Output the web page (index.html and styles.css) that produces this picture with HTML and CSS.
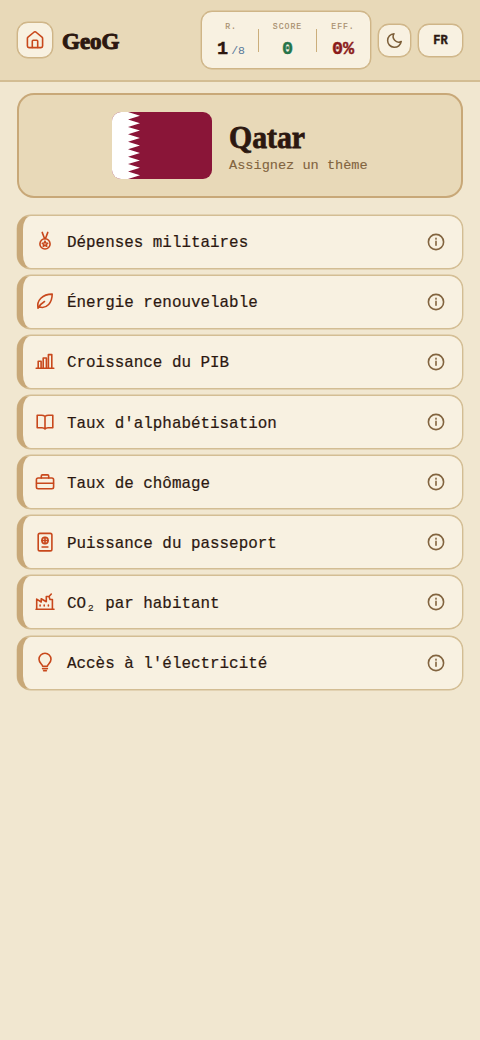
FILE: index.html
```html
<!DOCTYPE html>
<html lang="fr">
<head>
<meta charset="utf-8">
<title>GeoG</title>
<link rel="stylesheet" href="styles.css">
</head>
<body>
<svg class="defs" aria-hidden="true">
  <symbol id="info" viewBox="0 0 18 18"><circle cx="9" cy="9" r="7.6"/><path d="M9 8.3v4M9 5.4v.7"/></symbol>
</svg>
<header class="topbar">
  <button class="btn home" aria-label="Accueil"><svg class="icon" viewBox="0 0 20 20"><path d="M2.4 8.4Q2.4 7.6 3 7.1L9.2 2Q10 1.4 10.8 2L17 7.1Q17.6 7.6 17.6 8.4V16Q17.6 17.6 16 17.6H4Q2.4 17.6 2.4 16Z"/><path d="M7.3 17.4V11.2Q7.3 10.3 8.2 10.3H11.8Q12.7 10.3 12.7 11.2V17.4"/></svg></button>
  <div class="brand"><span class="fit">GeoG</span></div>
  <div class="stats">
    <div class="stat round"><span class="label">R.</span><span class="value">1<small>/8</small></span></div>
    <i class="sep"></i>
    <div class="stat score"><span class="label">SCORE</span><span class="value">0</span></div>
    <i class="sep"></i>
    <div class="stat eff"><span class="label">EFF.</span><span class="value">0%</span></div>
  </div>
  <button class="btn theme" aria-label="Mode sombre"><svg class="icon" viewBox="0 0 20 20"><path d="M9.5 2.8A5.8 5.8 0 0 0 17.1 11A7.2 7.2 0 1 1 9.5 2.8Z"/></svg></button>
  <button class="btn lang">FR</button>
</header>
<main>
  <section class="hero">
    <svg class="flag" viewBox="0 0 100 67"><rect width="100" height="67" fill="#8a1538"/><path fill="#fff" d="M0 0H16L28 3.7L16 7.4L28 11.2L16 14.9L28 18.6L16 22.3L28 26L16 29.8L28 33.5L16 37.2L28 41L16 44.7L28 48.4L16 52.1L28 55.8L16 59.6L28 63.3L16 67H0Z"/></svg>
    <div class="country"><h1><span class="fit">Qatar</span></h1><p>Assignez un thème</p></div>
  </section>
  <ul class="themes">
    <li><svg class="icon" viewBox="0 0 20 20"><path d="M7.2 1.4L9.5 7.5M12.8 1.4L10.5 7.5"/><circle cx="10" cy="12.9" r="5.1"/><path d="M10 10.2L10.8 12L12.7 12.2L11.3 13.5L11.7 15.3L10 14.4L8.3 15.3L8.7 13.5L7.3 12.2L9.2 12Z"/></svg><span>Dépenses militaires</span><svg class="info"><use href="#info"/></svg></li>
    <li><svg class="icon" viewBox="0 0 20 20"><path d="M3 17.2C1.4 9.5 7.5 3.1 17.2 3.1C17.2 11.5 12 18.2 4.4 16M3 17.2Q5 13.2 9.5 10.5"/></svg><span>Énergie renouvelable</span><svg class="info"><use href="#info"/></svg></li>
    <li><svg class="icon" viewBox="0 0 20 20"><path d="M1.2 17.2H18.8M3.2 17V10.3H6.1V17M8.2 17V7H11.4V17M13.4 17V3.6H16.8V17"/></svg><span>Croissance du PIB</span><svg class="info"><use href="#info"/></svg></li>
    <li><svg class="icon" viewBox="0 0 20 20"><path d="M10 4.3Q8.5 3.2 6.5 3.2H2.2V15.7H7Q9 15.7 10 17Q11 15.7 13 15.7H17.8V3.2H13.5Q11.5 3.2 10 4.3ZV17"/></svg><span>Taux d'alphabétisation</span><svg class="info"><use href="#info"/></svg></li>
    <li><svg class="icon" viewBox="0 0 20 20"><rect x="1.4" y="6" width="17.2" height="10.8" rx="1.7"/><path d="M6.3 6V4Q6.3 2.9 7.4 2.9H12.6Q13.7 2.9 13.7 4V6M1.6 11.2H18.4"/></svg><span>Taux de chômage</span><svg class="info"><use href="#info"/></svg></li>
    <li><svg class="icon" viewBox="0 0 20 20"><rect x="3.2" y="1.4" width="13.7" height="17.5" rx="1.7"/><circle cx="10" cy="8.5" r="3.1"/><path d="M7 8.5H13M10 5.5V11.5M7.1 15H12.9"/></svg><span>Puissance du passeport</span><svg class="info"><use href="#info"/></svg></li>
    <li><svg class="icon" viewBox="0 0 20 20"><path d="M1 17.2H19M1.7 17V7.1L6.2 10V6.7L11.3 9.7V4.5H14L15 7.5H17.4V17M14.5 4L16.3 2M5.1 14V13M9.2 14V13M13.4 14V13"/></svg><span>CO<span class="sub">₂</span> par habitant</span><svg class="info"><use href="#info"/></svg></li>
    <li><svg class="icon" viewBox="0 0 20 20"><path d="M7.6 14.3C7.6 12.3 4 11.2 4 7.2A6 6 0 0 1 16 7.2C16 11.2 12.4 12.3 12.4 14.3ZM7.6 16.6H12.4M8.6 18.8H11.4"/></svg><span>Accès à l'électricité</span><svg class="info"><use href="#info"/></svg></li>
  </ul>
</main>
</body>
</html>
```
FILE: styles.css
```css
* { box-sizing: border-box; }
body { margin: 0; min-height: 1040px; background: #f1e7d0; color: #2c1810; font-family: "Liberation Mono", monospace; }
.defs { position: absolute; width: 0; height: 0; }
svg { fill: none; stroke: currentColor; stroke-width: 1.6; stroke-linecap: round; stroke-linejoin: round; flex: none; }
.icon { width: 20px; height: 20px; }
.topbar { display: flex; align-items: center; height: 82px; padding: 0 17px; background: #e8d9b8; border-bottom: 2px solid #d3bd93; }
.btn { display: flex; align-items: center; justify-content: center; padding: 0; background: #f8f1e1; border: 1.5px solid #cfb587; border-radius: 11px; box-shadow: 0 0 0 .4px #cfb587; color: #2c1810; }
.home { width: 36px; height: 36px; color: #c8481c; }
.theme { width: 33px; height: 33px; margin-left: 7px; color: #7c5e38; }
.theme .icon { width: 19px; height: 19px; }
.lang { width: 45px; height: 33px; margin-left: 7px; padding-top: 1px; font: bold 12px "Liberation Mono", monospace; -webkit-text-stroke: .4px; }
.brand { width: 58px; margin: 4px 0 0 9px; font: bold 23px/36px "Liberation Serif", serif; -webkit-text-stroke: 1px; }
.fit { display: inline-block; transform-origin: left center; }
.stats { display: flex; align-items: center; height: 58px; width: 170px; margin-left: auto; padding: 0 15px; background: #f8f1e1; border: 1.5px solid #cfb587; border-radius: 11px; box-shadow: 0 0 0 .4px #cfb587; }
.sep { flex: none; width: 1px; height: 23px; background: #cbae7b; }
.stat { flex: none; display: flex; flex-direction: column; align-items: center; height: 42px; padding-top: 2px; }
.round { width: 41px; padding-right: 13px; }
.value { font: bold 18.5px/20px "Liberation Mono", monospace; margin-top: 7px; white-space: nowrap; -webkit-text-stroke: .4px; }
.score { width: 57px; }
.eff { width: 38px; padding-left: 14px; }
.label { font-size: 8.2px; line-height: 12px; letter-spacing: .95px; color: #a68c6b; -webkit-text-stroke: .15px; }
.value small { font-size: 11.5px; font-weight: normal; color: #58799b; margin-left: 3px; -webkit-text-stroke: 0; }
.score .value { color: #26744a; }
.eff .value { color: #8b1a1a; }
main { padding: 11px 17px 0; }
.hero { display: flex; align-items: center; justify-content: center; gap: 17px; height: 105px; background: #e8d9b8; border: 2px solid #c8a878; border-radius: 17px; }
.flag { width: 100px; height: 67px; border-radius: 9px; stroke: none; }
.country { width: 139px; padding-top: 2px; }
h1 { margin: 0; font: bold 32px/34px "Liberation Serif", serif; -webkit-text-stroke: .8px; }
h1 .fit { transform: scaleX(.93); }
.country p { margin: 4px 0 0; font-size: 13.6px; line-height: 16px; color: #82643f; white-space: nowrap; -webkit-text-stroke: .1px; }
.themes { display: grid; gap: 6.15px; margin: 16.6px 0 0; padding: 0; list-style: none; }
.themes li { display: flex; align-items: center; height: 54px; padding: 0 17px 0 12px; background: #f8f1e1; border: 1.5px solid #d3bd93; border-left: 6px solid #c8a878; border-radius: 14px; box-shadow: 0 0 0 .4px #d3bd93; font-size: 15.9px; -webkit-text-stroke: .2px; }
.themes .icon { color: #c8481c; margin-bottom: 1px; }
.themes li > span { margin: 3px auto 0 12px; }
.sub { display: inline-block; width: .6em; transform: translateY(2px); }
.info { width: 18px; height: 18px; color: #82643f; }
```
